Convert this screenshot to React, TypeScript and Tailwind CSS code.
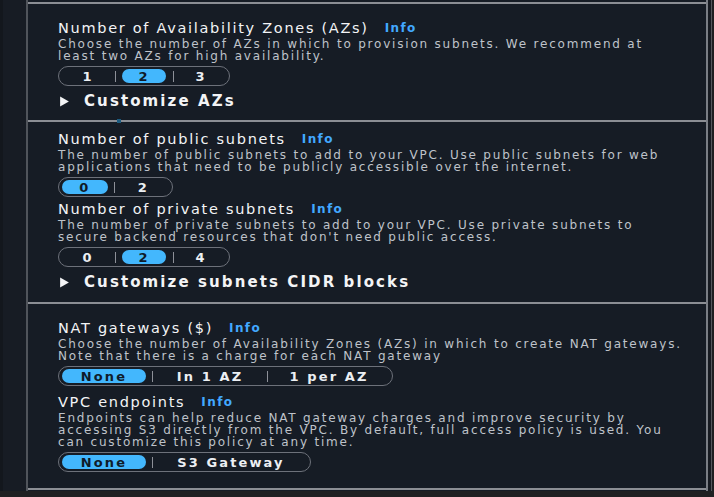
import React from 'react';

const Info = () => (
  <span className="ml-[16px] text-[12px] font-bold leading-none tracking-[1.4px] text-[#42a8ff]">Info</span>
);

const Seg = ({ w, children }: { w: string; children: React.ReactNode }) => (
  <div className={`flex h-[20px] items-center rounded-full border border-[#6d717a] pl-[3px] ${w}`}>{children}</div>
);

const Opt = ({ on = false, cls, children }: { on?: boolean; cls: string; children: React.ReactNode }) => (
  <span
    className={`flex h-[14px] items-center justify-center rounded-full text-[13px] font-bold leading-none tracking-[2.1px] ${cls} ${
      on ? 'bg-[#43b7fd] text-[#0f1b2a]' : 'text-[#eceff3]'
    }`}
  >
    {children}
  </span>
);

const Sep = ({ cls = '' }: { cls?: string }) => <span className={`h-[11px] w-px bg-[#8d9098] ${cls}`} />;

const Field = ({
  title,
  desc,
  children,
  className = '',
}: {
  title: string;
  desc: string[];
  children: React.ReactNode;
  className?: string;
}) => (
  <div className={className}>
    <div className="flex h-[18px] items-center text-[14.5px] leading-[18px] tracking-[1.7px] text-[#f3f4f6]">
      {title}
      <Info />
    </div>
    <div className="mt-[1px] text-[12px] leading-[12px] tracking-[1.8px] text-[#bfc3ca]">
      {desc.map((d) => (
        <div key={d}>{d}</div>
      ))}
    </div>
    <div className="mt-[4px]">{children}</div>
  </div>
);

const Expander = ({ label }: { label: string }) => (
  <div className="mt-[5px] flex h-[20px] items-center text-[15px] font-bold leading-[20px] tracking-[2.1px] text-[#f3f4f6]">
    <svg width="11" height="11" viewBox="0 0 10 10" className="ml-[1px] mr-[14px]">
      <path d="M1 0.5 L9 5 L1 9.5 Z" fill="#f3f4f6" />
    </svg>
    {label}
  </div>
);

export default function App() {
  return (
    <div
      className="flex h-[497px] w-[714px] flex-col overflow-hidden bg-[#1f2022]"
      style={{ fontFamily: '"DejaVu Sans", "Open Sans", sans-serif' }}
    >
      <div className="flex h-[491px]">
        <div className="w-[26px] border-l-[3px] border-[#13171d] bg-[#171c24]" />
        <div className="flex flex-1 flex-col border-l-2 border-r-2 border-l-[#50545b] border-r-[#7a7e85] bg-[#161c25]">
          <div className="mt-[2px] h-[2px] bg-[#8b8e94]" />

          {/* Availability zones */}
          <div className="h-[116px] pl-[30px] pt-[15px]">
            <Field
              title="Number of Availability Zones (AZs)"
              desc={[
                'Choose the number of AZs in which to provision subnets. We recommend at',
                'least two AZs for high availability.',
              ]}
            >
              <Seg w="w-[172px]">
                <Opt cls="w-[52px]">1</Opt>
                <Sep cls="ml-[1px]" />
                <Opt on cls="ml-[6px] w-[44px]">2</Opt>
                <Sep cls="ml-[7px]" />
                <Opt cls="w-[54px]">3</Opt>
              </Seg>
            </Field>
            <Expander label="Customize AZs" />
          </div>

          <div className="relative h-[2px] bg-[#8b8e94]">
            <span className="absolute left-[89px] top-[-1px] h-[4px] w-[4px] bg-[#1d5c80]" />
          </div>

          {/* Subnets */}
          <div className="h-[180px] pl-[30px] pt-[8px]">
            <Field
              title="Number of public subnets"
              desc={[
                'The number of public subnets to add to your VPC. Use public subnets for web',
                'applications that need to be publicly accessible over the internet.',
              ]}
            >
              <Seg w="w-[115px]">
                <Opt on cls="w-[46px]">0</Opt>
                <Sep cls="ml-[6px]" />
                <Opt cls="w-[58px]">2</Opt>
              </Seg>
            </Field>
            <Field
              className="mt-[3px]"
              title="Number of private subnets"
              desc={[
                'The number of private subnets to add to your VPC. Use private subnets to',
                "secure backend resources that don't need public access.",
              ]}
            >
              <Seg w="w-[172px]">
                <Opt cls="w-[52px]">0</Opt>
                <Sep cls="ml-[1px]" />
                <Opt on cls="ml-[6px] w-[44px]">2</Opt>
                <Sep cls="ml-[7px]" />
                <Opt cls="w-[54px]">4</Opt>
              </Seg>
            </Field>
            <Expander label="Customize subnets CIDR blocks" />
          </div>

          <div className="h-[2px] bg-[#8b8e94]" />

          {/* NAT + endpoints */}
          <div className="flex-1 pl-[30px] pt-[15px]">
            <Field
              title="NAT gateways ($)"
              desc={[
                'Choose the number of Availability Zones (AZs) in which to create NAT gateways.',
                'Note that there is a charge for each NAT gateway',
              ]}
            >
              <Seg w="w-[335px]">
                <Opt on cls="w-[84px]">None</Opt>
                <Sep cls="ml-[6px]" />
                <Opt cls="w-[114px]">In 1 AZ</Opt>
                <Sep />
                <Opt cls="w-[122px]">1 per AZ</Opt>
              </Seg>
            </Field>
            <Field
              className="mt-[7px]"
              title="VPC endpoints"
              desc={[
                'Endpoints can help reduce NAT gateway charges and improve security by',
                'accessing S3 directly from the VPC. By default, full access policy is used. You',
                'can customize this policy at any time.',
              ]}
            >
              <Seg w="w-[253px]">
                <Opt on cls="w-[84px]">None</Opt>
                <Sep cls="ml-[6px]" />
                <Opt cls="w-[156px]">S3 Gateway</Opt>
              </Seg>
            </Field>
          </div>

          <div className="mb-[1px] h-[2px] bg-[#8b8e94]" />
        </div>
        <div className="w-[4px] border-r border-[#55585e] bg-[#171b22]" />
        <div className="w-[2px] bg-[#1e1f22]" />
      </div>
    </div>
  );
}
